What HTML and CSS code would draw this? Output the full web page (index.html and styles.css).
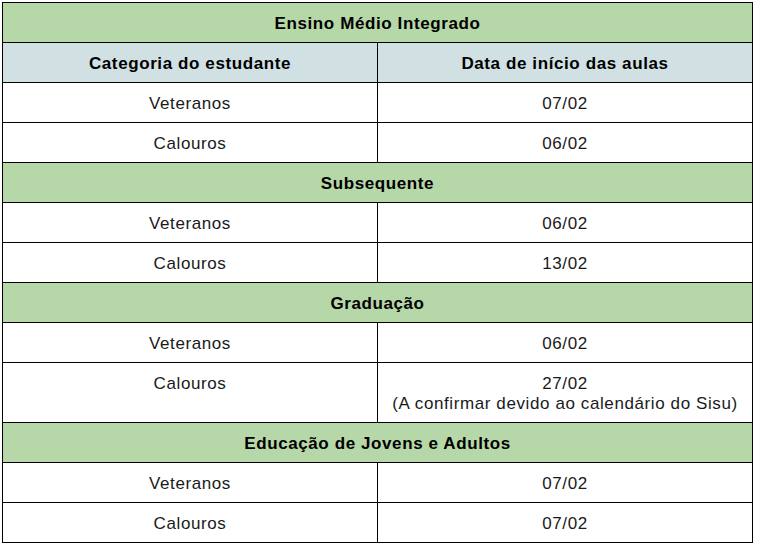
FILE: index.html
```html
<!DOCTYPE html>
<html lang="pt-BR">
<head>
<meta charset="utf-8">
<title>Calendário</title>
<link rel="stylesheet" href="styles.css">
</head>
<body>
<table class="tbl">
  <tr class="sec"><td colspan="2">Ensino Médio Integrado</td></tr>
  <tr class="head"><td class="l">Categoria do estudante</td><td>Data de início das aulas</td></tr>
  <tr><td class="l">Veteranos</td><td>07/02</td></tr>
  <tr><td class="l">Calouros</td><td>06/02</td></tr>
  <tr class="sec"><td colspan="2">Subsequente</td></tr>
  <tr><td class="l">Veteranos</td><td>06/02</td></tr>
  <tr><td class="l">Calouros</td><td>13/02</td></tr>
  <tr class="sec"><td colspan="2">Graduação</td></tr>
  <tr><td class="l">Veteranos</td><td>06/02</td></tr>
  <tr><td class="l">Calouros</td><td>27/02<br>(A confirmar devido ao calendário do Sisu)</td></tr>
  <tr class="sec"><td colspan="2">Educação de Jovens e Adultos</td></tr>
  <tr><td class="l">Veteranos</td><td>07/02</td></tr>
  <tr><td class="l">Calouros</td><td>07/02</td></tr>
</table>
</body>
</html>
```
FILE: styles.css
```css
html, body {
  margin: 0;
  padding: 0;
  background: #fff;
}
.tbl {
  margin: 2px 0 0 2px;
  width: 751px;
  border-collapse: collapse;
  table-layout: fixed;
  font-family: "Liberation Sans", Arial, sans-serif;
  font-size: 17px;
  letter-spacing: 0.6px;
  line-height: 20px;
  color: #1a1a1a;
}
.tbl td {
  border: 1px solid #000;
  padding: 11px 0 8px;
  text-align: center;
  vertical-align: top;
  width: 50%;
}
.tbl td.l {
  border-right: 1px dotted #444;
}
.tbl tr.sec td {
  background: #b6d7a8;
  font-weight: bold;
  color: #000;
}
.tbl tr.head td {
  background: #d0e0e3;
  font-weight: bold;
  color: #000;
}
```
